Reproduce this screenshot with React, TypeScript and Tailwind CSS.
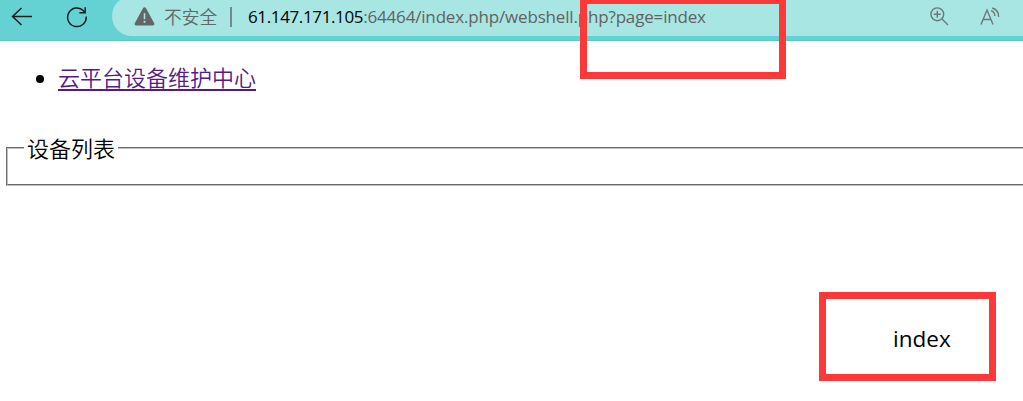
import React from 'react';

function BackIcon() {
  return (
    <svg className="w-[22px] h-[20px]" viewBox="0 0 22 20" fill="none" stroke="#10201f" strokeWidth="1.5">
      <path d="M21 9.5H1.5M10.5 1 1.5 9.5l9 8.5" />
    </svg>
  );
}

function ReloadIcon() {
  return (
    <svg className="w-[22px] h-[22px]" viewBox="0 0 22 22" fill="none" stroke="#10201f" strokeWidth="1.5">
      <path d="M20.2 10.5A9.3 9.3 0 1 1 17.5 4.7L18.8 6.4" />
      <path d="M19.2 1.2v5.6h-5.8" />
    </svg>
  );
}

function WarningIcon() {
  return (
    <svg className="w-[21px] h-[19px]" viewBox="0 0 21 19">
      <path d="M9.1 1.1a1.6 1.6 0 0 1 2.8 0l8.3 15.1a1.6 1.6 0 0 1-1.4 2.4H2.2a1.6 1.6 0 0 1-1.4-2.4z" fill="#626666" />
      <path d="M10.5 6.2v6" stroke="#a8e6e4" strokeWidth="1.6" />
      <circle cx="10.5" cy="14.8" r="1.1" fill="#a8e6e4" />
    </svg>
  );
}

function ZoomIcon() {
  return (
    <svg className="w-[19px] h-[19px]" viewBox="0 0 19 19" fill="none" stroke="#6b7878" strokeWidth="1.4">
      <circle cx="7.3" cy="7.3" r="6.4" />
      <path d="M12 12l6 6M7.3 3.8v7M3.8 7.3h7" />
    </svg>
  );
}

function ReadAloudIcon() {
  return (
    <svg className="w-[20px] h-[19px]" viewBox="0 0 20 19" fill="none" stroke="#6b7878" strokeWidth="1.4">
      <path d="M1 17.5 7 3l6 14.5M3.2 12.5h7.6" />
      <path d="M11 3.7c2.3.7 3.7 2.6 3.9 5.3M12.2 1c3.9 1.1 6.5 4.5 6.5 9" />
    </svg>
  );
}

function AddressBar() {
  return (
    <header className="relative h-[41px] bg-[#64d2d2] border-b border-[#58c8c9] overflow-hidden flex items-start">
      <div className="w-[112px] h-[33px] pl-[11px] flex items-center gap-[33px] shrink-0">
        <BackIcon />
        <ReloadIcon />
      </div>
      <div className="flex-1 h-[40px] -mt-1 pt-[4px] pl-[22px] pr-[23px] rounded-l-[20px] bg-[#a8e6e4] flex items-center whitespace-nowrap">
        <div className="h-[33px] -mt-[3px] flex-1 flex items-center">
          <WarningIcon />
          <span className="ml-[9px] w-[53px] text-[17.7px] leading-[24px] text-[#5f6868] font-[350]">不安全</span>
          <span className="ml-[13px] w-[2px] h-[20px] bg-[#6f8c8b]" />
          <span className="ml-[16px] text-[17px] leading-[24px] text-[#626262] tracking-[-0.17px]">
            <span className="text-black tracking-[-0.37px]">61.147.171.105</span>:64464/index.php/webshell.php?page=index
          </span>
          <span className="ml-auto flex gap-[31px]">
            <ZoomIcon />
            <ReadAloudIcon />
          </span>
        </div>
      </div>
    </header>
  );
}

export default function App() {
  return (
    <div className="relative w-full h-[401px] bg-white text-black overflow-hidden font-['Open_Sans','Noto_Sans_CJK_SC',sans-serif]">
      <AddressBar />

      <main className="pl-[6px] text-[22px] leading-[30px]">
        <ul className="pt-[21px] pl-[30px]">
          <li className="flex items-center">
            <span className="w-[8px] h-[8px] mr-[14px] mt-[4px] rounded-full bg-black" />
            <a href="#" className="text-[#551a8b] font-[350] underline decoration-2 underline-offset-[3px]">云平台设备维护中心</a>
          </li>
        </ul>

        <fieldset className="mt-[41px] -mr-2 h-[53px] border-2 border-[#c0c0c0] [border-style:groove] pl-[16px]">
          <legend className="px-[3px] font-[350]">设备列表</legend>
        </fieldset>

        <p className="mt-[138px] pl-[887px] text-[22.5px]">index</p>
      </main>

      {/* highlight frames */}
      <div className="absolute left-[580px] top-[-3px] w-[206px] h-[82px] border-[7px] border-[#fd3838]" />
      <div className="absolute left-[819px] top-[292px] w-[177px] h-[89px] border-[7px] border-[#fd3838]" />
    </div>
  );
}
